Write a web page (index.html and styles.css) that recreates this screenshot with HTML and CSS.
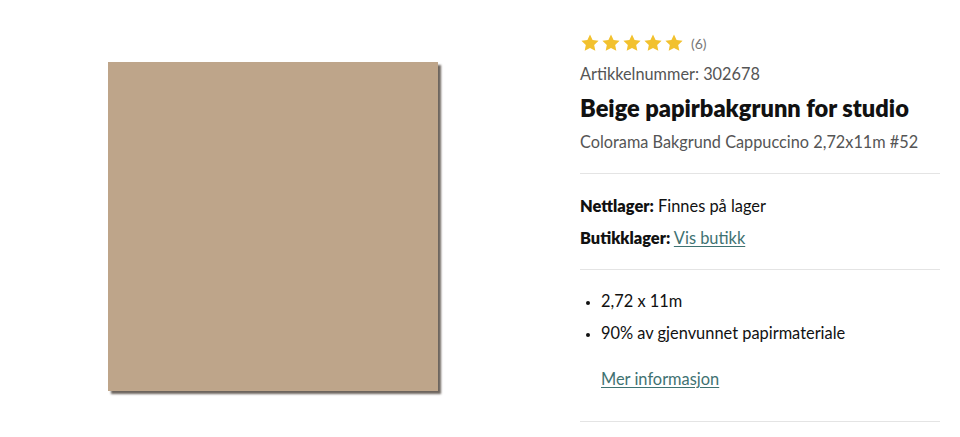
FILE: index.html
```html
<!DOCTYPE html>
<html lang="no">
<head>
<meta charset="utf-8">
<link rel="stylesheet" href="styles.css">
</head>
<body>
<div class="page">
  <div class="media">
    <div class="swatch"></div>
  </div>
  <div class="info">
    <div class="rating">
      <div class="stars">
        <svg viewBox="0 0 24 24" class="star"><path d="M12 1.8l3.1 6.6 7.2.9-5.3 5 1.4 7.1L12 17.9l-6.4 3.5 1.4-7.1-5.3-5 7.2-.9z"/></svg>
        <svg viewBox="0 0 24 24" class="star"><path d="M12 1.8l3.1 6.6 7.2.9-5.3 5 1.4 7.1L12 17.9l-6.4 3.5 1.4-7.1-5.3-5 7.2-.9z"/></svg>
        <svg viewBox="0 0 24 24" class="star"><path d="M12 1.8l3.1 6.6 7.2.9-5.3 5 1.4 7.1L12 17.9l-6.4 3.5 1.4-7.1-5.3-5 7.2-.9z"/></svg>
        <svg viewBox="0 0 24 24" class="star"><path d="M12 1.8l3.1 6.6 7.2.9-5.3 5 1.4 7.1L12 17.9l-6.4 3.5 1.4-7.1-5.3-5 7.2-.9z"/></svg>
        <svg viewBox="0 0 24 24" class="star"><path d="M12 1.8l3.1 6.6 7.2.9-5.3 5 1.4 7.1L12 17.9l-6.4 3.5 1.4-7.1-5.3-5 7.2-.9z"/></svg>
      </div>
      <span class="count">(6)</span>
    </div>
    <div class="sku">Artikkelnummer: 302678</div>
    <h1 class="title">Beige papirbakgrunn for studio</h1>
    <div class="subtitle">Colorama Bakgrund Cappuccino 2,72x11m #52</div>
    <div class="section stock">
      <div class="line"><b>Nettlager:</b> Finnes på lager</div>
      <div class="line"><b>Butikklager:</b> <a href="#" class="link">Vis butikk</a></div>
    </div>
    <div class="section features">
      <ul class="list">
        <li>2,72 x 11m</li>
        <li>90% av gjenvunnet papirmateriale</li>
      </ul>
      <a href="#" class="link more">Mer informasjon</a>
    </div>
  </div>
</div>
</body>
</html>
```
FILE: styles.css
```css
html, body {
  margin: 0;
  padding: 0;
  background: #fff;
}
body {
  font-family: "Lato", "Liberation Sans", sans-serif;
  color: #111;
}
.page {
  display: flex;
  width: 960px;
  height: 437px;
}
.media {
  width: 580px;
  padding: 62px 0 0 108px;
  box-sizing: border-box;
}
.swatch {
  width: 330px;
  height: 329px;
  background: #bea58a;
  box-shadow: 3px 3px 2px rgba(60, 50, 40, 0.75);
}
.info {
  width: 360px;
  padding-top: 32px;
}
.rating {
  display: flex;
  align-items: center;
  height: 22px;
}
.stars {
  display: flex;
  gap: 1px;
}
.star {
  width: 20px;
  height: 20px;
  fill: #f2c12e;
}
.count {
  margin-left: 7px;
  font-size: 14px;
  color: #777;
}
.sku {
  margin-top: 9px;
  font-size: 16.3px;
  line-height: 22px;
  color: #555;
}
.title {
  margin: 9px 0 0;
  font-size: 23.6px;
  line-height: 28px;
  font-weight: 800;
  color: #111;
}
.subtitle {
  margin-top: 9px;
  font-size: 16.3px;
  line-height: 22px;
  color: #555;
}
.section {
  border-top: 1px solid #e4e4e4;
}
.stock {
  margin-top: 20px;
  padding: 21px 0 20px;
}
.line {
  font-size: 16.4px;
  line-height: 22px;
  margin-bottom: 10px;
}
.line:last-child {
  margin-bottom: 0;
}
.line b {
  font-weight: 800;
}
.link {
  color: #3f7272;
  text-decoration: underline;
  text-underline-offset: 2px;
}
.features {
  padding: 20px 0 31px;
  border-bottom: 1px solid #e4e4e4;
}
.list {
  margin: 0;
  padding: 0 0 0 21px;
  font-size: 16.4px;
  line-height: 22px;
}
.list li {
  margin-bottom: 10px;
}
.list li:last-child {
  margin-bottom: 0;
}
.list li::marker {
  font-size: 13px;
}
.more {
  display: block;
  width: fit-content;
  margin: 24px 0 0 21px;
  font-size: 16.4px;
  line-height: 22px;
}
```
